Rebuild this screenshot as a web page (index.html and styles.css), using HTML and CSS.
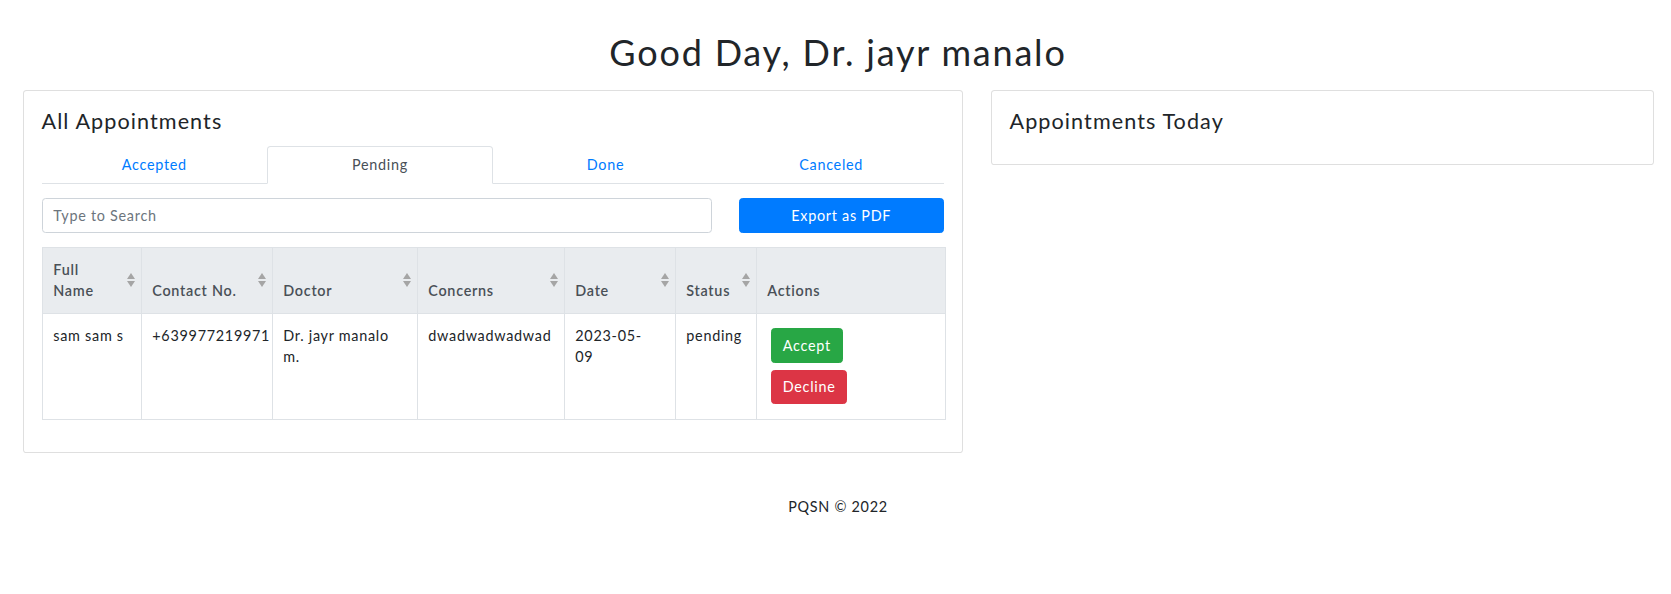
FILE: index.html
```html
<!DOCTYPE html>
<html lang="en">
<head>
<meta charset="utf-8">
<title>Dashboard</title>
<link rel="stylesheet" href="styles.css">
</head>
<body>
<div class="page">
  <h1 class="page-title">Good Day, Dr. jayr manalo</h1>
  <div class="main-row">
    <section class="card card-all">
      <h4 class="card-title">All Appointments</h4>
      <ul class="tabs">
        <li><a href="#" class="tab">Accepted</a></li>
        <li><a href="#" class="tab active">Pending</a></li>
        <li><a href="#" class="tab">Done</a></li>
        <li><a href="#" class="tab">Canceled</a></li>
      </ul>
      <div class="toolbar">
        <input class="search" type="text" placeholder="Type to Search">
        <button class="btn btn-primary btn-export">Export as PDF</button>
      </div>
      <table class="table">
        <colgroup>
          <col class="c-name"><col class="c-contact"><col class="c-doctor"><col class="c-concerns"><col class="c-date"><col class="c-status"><col class="c-actions">
        </colgroup>
        <thead>
          <tr>
            <th class="sortable">Full Name</th>
            <th class="sortable">Contact No.</th>
            <th class="sortable">Doctor</th>
            <th class="sortable">Concerns</th>
            <th class="sortable">Date</th>
            <th class="sortable">Status</th>
            <th>Actions</th>
          </tr>
        </thead>
        <tbody>
          <tr>
            <td>sam sam s</td>
            <td>+639977219971</td>
            <td>Dr. jayr manalo m.</td>
            <td>dwadwadwadwad</td>
            <td><span class="date">2023-05-09</span></td>
            <td>pending</td>
            <td>
              <div class="actions">
                <button class="btn btn-success">Accept</button>
                <button class="btn btn-danger">Decline</button>
              </div>
            </td>
          </tr>
        </tbody>
      </table>
    </section>
    <section class="card card-today">
      <h4 class="card-title">Appointments Today</h4>
    </section>
  </div>
  <footer class="footer">PQSN © 2022</footer>
</div>
</body>
</html>
```

FILE: styles.css
```css
* { box-sizing: border-box; }

html, body {
  margin: 0;
  padding: 0;
  background: #fff;
}

body {
  font-family: "Lato", "Noto Sans", sans-serif;
  font-size: 14.4px;
  line-height: 1.5;
  letter-spacing: 0.05em;
  color: #212529;
}

.page {
  padding: 0 17.5px 0 22.5px;
}

.page-title {
  margin: 31px 0 16px;
  font-size: 36px;
  font-weight: 400;
  line-height: 1.2;
  letter-spacing: 0.05em;
  text-align: center;
  color: #212529;
}

.main-row {
  display: flex;
  align-items: flex-start;
  gap: 27.5px;
}

.card {
  border: 1px solid rgba(0, 0, 0, 0.125);
  border-radius: 3.6px;
  padding: 18px;
  background: #fff;
}

.card-all { width: 940.5px; flex: none; }
.card-today { flex: 1; }

.card-title {
  margin: 0 0 10.8px;
  font-size: 21.6px;
  font-weight: 400;
  line-height: 1.2;
  letter-spacing: 0.05em;
}

.tabs {
  display: flex;
  list-style: none;
  margin: 0;
  padding: 0;
  border-bottom: 1px solid #dee2e6;
}

.tabs li {
  flex: 1;
  text-align: center;
}

.tab {
  display: block;
  padding: 7.2px 14.4px;
  margin-bottom: -1px;
  border: 1px solid transparent;
  border-radius: 3.6px 3.6px 0 0;
  color: #007bff;
  text-decoration: none;
}

.tab.active {
  color: #495057;
  background: #fff;
  border-color: #dee2e6 #dee2e6 #fff;
}

.toolbar {
  display: flex;
  gap: 27px;
  margin-top: 14.4px;
}

.search {
  width: 670px;
  height: 34.4px;
  padding: 5.4px 10.8px;
  border: 1px solid #ced4da;
  border-radius: 3.6px;
  font: inherit;
  letter-spacing: inherit;
  color: #495057;
}

.search::placeholder { color: #6c757d; }

.btn {
  display: inline-block;
  padding: 5.4px 10.8px;
  border: 1px solid transparent;
  border-radius: 3.6px;
  font: inherit;
  letter-spacing: inherit;
  line-height: 1.5;
  color: #fff;
  cursor: pointer;
}

.btn-export { flex: 1; }
.btn-primary { background: #007bff; border-color: #007bff; }
.btn-success { background: #28a745; border-color: #28a745; }
.btn-danger { background: #dc3545; border-color: #dc3545; }

.table {
  width: 100%;
  margin: 14.4px 0 14.4px;
  border-collapse: collapse;
  table-layout: fixed;
}

.c-name { width: 99px; }
.c-contact { width: 131px; }
.c-doctor { width: 145px; }
.c-concerns { width: 147px; }
.c-date { width: 111px; }
.c-status { width: 81px; }
.c-actions { width: 189px; }

.table th,
.table td {
  border: 1px solid #dee2e6;
  padding: 10.8px;
  text-align: left;
}

.table th {
  position: relative;
  vertical-align: bottom;
  background: #e9ecef;
  color: #495057;
  font-weight: 600;
}

.table th.sortable { padding-right: 30px; }

.table th.sortable::before,
.table th.sortable::after {
  content: "";
  position: absolute;
  right: 6px;
  width: 0;
  height: 0;
  border-left: 4.5px solid transparent;
  border-right: 4.5px solid transparent;
}

.table th.sortable::before {
  top: calc(50% - 7px);
  border-bottom: 6px solid #a5a5a5;
}

.table th.sortable::after {
  top: calc(50% + 1px);
  border-top: 6px solid #a5a5a5;
}

.table td { vertical-align: top; }

.date {
  display: inline-block;
  max-width: 72px;
}

.actions {
  display: flex;
  flex-direction: column;
  align-items: flex-start;
}

.actions .btn { margin: 3.6px; }

.footer {
  margin-top: 43px;
  text-align: center;
}
```
